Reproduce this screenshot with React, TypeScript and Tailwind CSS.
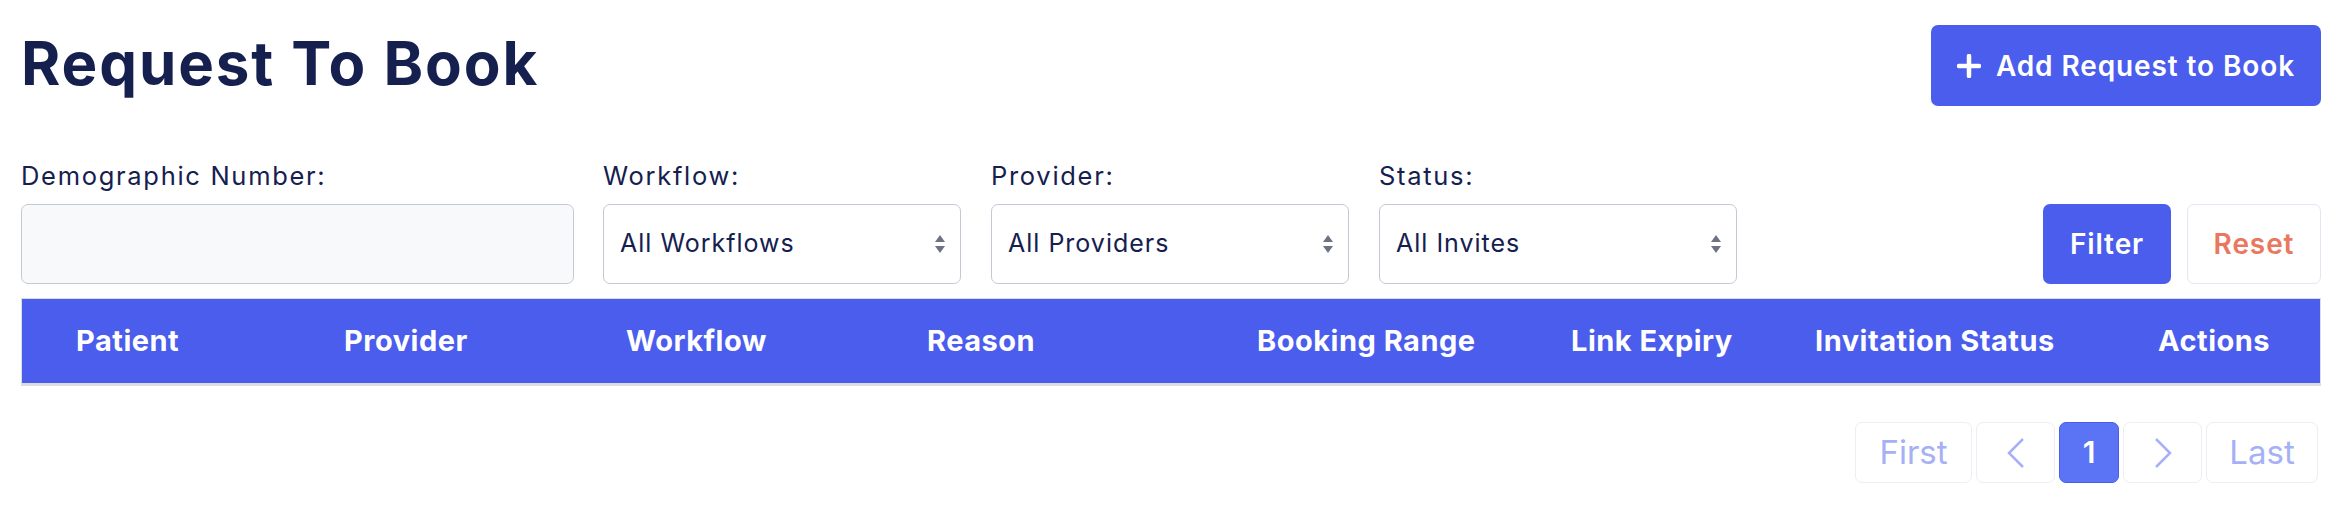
import React from 'react';

const columns = ['Patient', 'Provider', 'Workflow', 'Reason', 'Booking Range', 'Link Expiry', 'Invitation Status', 'Actions'];

function Arrows() {
  return (
    <svg width="10" height="18" viewBox="0 0 10 18" className="shrink-0">
      <path d="M5 0 L10 7 L0 7 Z" fill="#6b7385" />
      <path d="M5 18 L10 11 L0 11 Z" fill="#6b7385" />
    </svg>
  );
}

function SelectBox({ label, value }: { label: string; value: string }) {
  return (
    <div className="w-[358px] mr-[30px]">
      <div className="text-[25.5px] leading-[30px] tracking-[1.7px] mb-[13px]">{label}</div>
      <div className="h-[80px] rounded-[7px] border border-[#c4c9d4] bg-white flex items-center justify-between pl-[16px] pr-[15px]">
        <span className="text-[25px] tracking-[1px]">{value}</span>
        <Arrows />
      </div>
    </div>
  );
}

export default function App() {
  return (
    <div className="w-[2342px] h-[508px] bg-white px-[21px] text-[#15204f] font-['Inter','Liberation_Sans',sans-serif]">
      {/* header */}
      <div className="flex items-center justify-between pt-[25px]">
        <h1 className="text-[60px] font-bold leading-[81px] tracking-[1.9px] -mt-[4px]">Request To Book</h1>
        <button className="h-[81px] w-[390px] rounded-[7px] bg-[#4b5ded] text-white text-[28px] font-semibold tracking-[0.9px] flex items-center justify-center gap-[15px]">
          <svg width="24" height="24" viewBox="0 0 24 24">
            <path d="M12 2 V22 M2 12 H22" stroke="white" strokeWidth="4.5" strokeLinecap="round" />
          </svg>
          Add Request to Book
        </button>
      </div>

      {/* filters */}
      <div className="flex items-end mt-[55px]">
        <div className="w-[553px] mr-[29px]">
          <div className="text-[25.5px] leading-[30px] tracking-[1.7px] mb-[13px]">Demographic Number:</div>
          <input className="w-full h-[80px] rounded-[7px] border border-[#c4c9d4] bg-[#f8f9fb] outline-none" />
        </div>
        <SelectBox label="Workflow:" value="All Workflows" />
        <SelectBox label="Provider:" value="All Providers" />
        <SelectBox label="Status:" value="All Invites" />
        <div className="ml-auto flex gap-[16px]">
          <button className="w-[128px] h-[80px] rounded-[7px] bg-[#4b5ded] text-white text-[28px] font-semibold tracking-[0.9px]">Filter</button>
          <button className="w-[134px] h-[80px] rounded-[7px] border border-[#e3e6f3] bg-white text-[#e9785f] text-[28px] font-semibold tracking-[0.9px]">Reset</button>
        </div>
      </div>

      {/* table */}
      <div className="mt-[14px] border-t border-x border-b-[3px] border-[#dcdde0]">
        <div className="h-[84px] bg-[#4b5ded] grid grid-cols-[268px_282px_301px_330px_314px_244px_343px_1fr] items-center pl-[54px] text-white text-[29px] font-bold tracking-[0.5px]">
          {columns.map((c) => (
            <div key={c} className="whitespace-nowrap">{c}</div>
          ))}
        </div>
      </div>

      {/* pagination */}
      <div className="flex justify-end gap-[4px] mt-[36px] mr-[3px]">
        <div className="w-[117px] h-[61px] rounded-[7px] border border-[#eceef4] flex items-center justify-center text-[33px] text-[#a6b0f6]">First</div>
        <div className="w-[79px] h-[61px] rounded-[7px] border border-[#eceef4] flex items-center justify-center">
          <svg width="18" height="30" viewBox="0 0 18 30">
            <polyline points="16,1 2,15 16,29" fill="none" stroke="#a6b0f6" strokeWidth="2.5" />
          </svg>
        </div>
        <div className="w-[60px] h-[61px] rounded-[7px] border border-[#4b5ded] bg-[#5b73f5] flex items-center justify-center text-[30px] font-semibold text-white">1</div>
        <div className="w-[79px] h-[61px] rounded-[7px] border border-[#eceef4] flex items-center justify-center">
          <svg width="18" height="30" viewBox="0 0 18 30">
            <polyline points="2,1 16,15 2,29" fill="none" stroke="#a6b0f6" strokeWidth="2.5" />
          </svg>
        </div>
        <div className="w-[112px] h-[61px] rounded-[7px] border border-[#eceef4] flex items-center justify-center text-[33px] text-[#a6b0f6]">Last</div>
      </div>
    </div>
  );
}
